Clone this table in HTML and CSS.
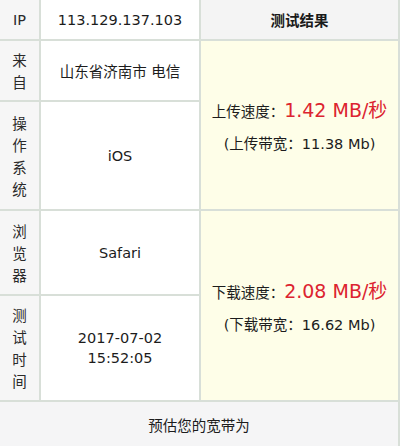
FILE: index.html
```html
<!DOCTYPE html>
<html lang="zh-CN">
<head>
<meta charset="utf-8">
<title>测速结果</title>
<link rel="stylesheet" href="styles.css">
</head>
<body>
<div class="table">
  <div class="cell label head">IP</div>
  <div class="cell value head">113.129.137.103</div>
  <div class="cell result-head">测试结果</div>

  <div class="cell label"><span class="stack">来自</span></div>
  <div class="cell value">山东省济南市 电信</div>
  <div class="cell result upload">
    <div class="speed">上传速度：<span class="num">1.42 MB/秒</span></div>
    <div class="band">(上传带宽：11.38 Mb)</div>
  </div>

  <div class="cell label"><span class="stack">操作系统</span></div>
  <div class="cell value">iOS</div>

  <div class="cell label"><span class="stack">浏览器</span></div>
  <div class="cell value">Safari</div>
  <div class="cell result download">
    <div class="speed">下载速度：<span class="num">2.08 MB/秒</span></div>
    <div class="band">(下载带宽：16.62 Mb)</div>
  </div>

  <div class="cell label"><span class="stack">测试时间</span></div>
  <div class="cell value time">2017-07-02<br>15:52:05</div>

  <div class="cell footer">预估您的宽带为</div>
</div>
</body>
</html>
```
FILE: styles.css
```css
* { box-sizing: border-box; }
html, body { margin: 0; padding: 0; background: #ffffff; }
body {
  font-family: "DejaVu Sans", "Noto Sans CJK SC", sans-serif;
  font-size: 14.5px;
  color: #1c1c1c;
}
.table {
  width: 400px;
  display: grid;
  grid-template-columns: 39px 158px 1fr;
  grid-template-rows: 39px 59px 107px 83px 104px 46px;
  gap: 2px;
  padding-right: 2px;
  background: #d8dfd8;
}
.cell {
  display: flex;
  align-items: center;
  justify-content: center;
  text-align: center;
}
.label {
  background: #f6f6f6;
  color: #2a2a2a;
}
.stack {
  display: block;
  width: 1em;
  line-height: 22px;
  font-family: "Noto Sans CJK SC", sans-serif;
}
.value {
  background: #ffffff;
}
.head {
  line-height: 20px;
}
.time {
  line-height: 20px;
}
.result-head {
  background: #f4f4f4;
  font-weight: bold;
  font-family: "Noto Sans CJK SC", sans-serif;
  color: #1a1a1a;
}
.result {
  background: #fefee8;
  flex-direction: column;
  gap: 11px;
  padding-top: 3px;
  grid-column: 3;
}
.upload { grid-row: 2 / 4; }
.download { grid-row: 4 / 6; }
.speed {
  line-height: 22px;
  white-space: nowrap;
}
.num {
  color: #dc2430;
  font-size: 19px;
}
.band {
  line-height: 20px;
  white-space: nowrap;
}
.footer {
  grid-column: 1 / 4;
  background: #f5f5f6;
  font-family: "Noto Sans CJK SC", sans-serif;
  align-items: flex-start;
  padding-top: 12px;
}
```
